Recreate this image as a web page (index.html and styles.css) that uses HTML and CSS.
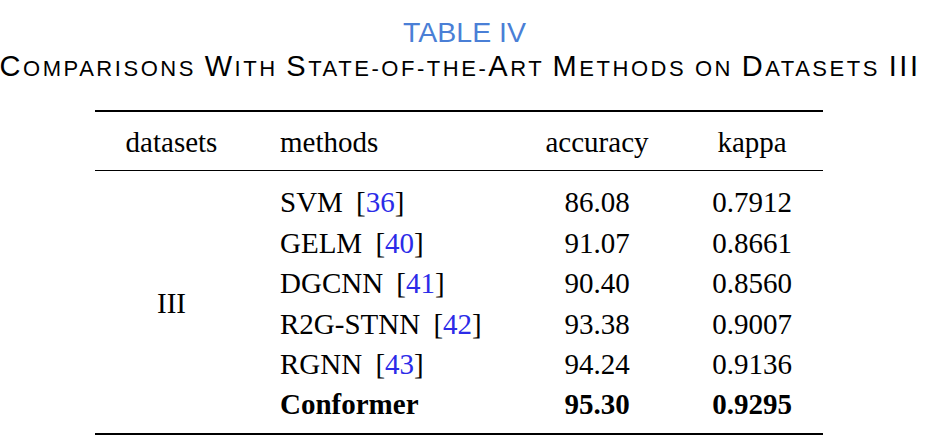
FILE: index.html
```html
<!DOCTYPE html>
<html>
<head>
<meta charset="utf-8">
<link rel="stylesheet" href="styles.css">
</head>
<body>
<div class="page">
  <div class="caption">
    <div class="label">TABLE IV</div>
    <div class="subtitle"><span class="big">C</span>OMPARISONS <span class="big">W</span>ITH <span class="big">S</span>TATE-OF-THE-<span class="big">A</span>RT <span class="big">M</span>ETHODS ON <span class="big">D</span>ATASETS <span class="big">III</span></div>
  </div>
  <div class="table">
    <div class="head">
      <div class="c1">datasets</div>
      <div class="c2">methods</div>
      <div class="c3">accuracy</div>
      <div class="c4">kappa</div>
    </div>
    <div class="body">
      <div class="c1 ds">III</div>
      <div class="c2">SVM [<span class="ref">36</span>]</div><div class="c3">86.08</div><div class="c4">0.7912</div>
      <div class="c2">GELM [<span class="ref">40</span>]</div><div class="c3">91.07</div><div class="c4">0.8661</div>
      <div class="c2">DGCNN [<span class="ref">41</span>]</div><div class="c3">90.40</div><div class="c4">0.8560</div>
      <div class="c2">R2G-STNN [<span class="ref">42</span>]</div><div class="c3">93.38</div><div class="c4">0.9007</div>
      <div class="c2">RGNN [<span class="ref">43</span>]</div><div class="c3">94.24</div><div class="c4">0.9136</div>
      <div class="c2 b">Conformer</div><div class="c3 b">95.30</div><div class="c4 b">0.9295</div>
    </div>
  </div>
</div>
</body>
</html>
```

FILE: styles.css
```css
html, body {
  margin: 0;
  padding: 0;
  background: #ffffff;
}
.page {
  width: 934px;
  height: 441px;
  display: flex;
  flex-direction: column;
}
.caption {
  display: flex;
  flex-direction: column;
  align-items: center;
  font-family: "Liberation Sans", Arial, sans-serif;
  padding-top: 16px;
}
.label {
  color: #4a7fd6;
  font-size: 28.5px;
  line-height: 33px;
  padding-right: 5px;
}
.subtitle {
  color: #000;
  font-size: 22px;
  line-height: 35px;
  letter-spacing: 2.55px;
  white-space: nowrap;
  padding-right: 14px;
}
.subtitle .big {
  font-size: 29px;
}
.table {
  margin-left: 95px;
  width: 728px;
  margin-top: 24px;
  border-top: 2px solid #000;
  border-bottom: 2px solid #000;
  font-family: "Liberation Serif", "Times New Roman", serif;
  font-size: 29px;
  line-height: 40.4px;
  color: #000;
}
.head, .body {
  display: grid;
  grid-template-columns: 153px 265px 168px 142px;
}
.head {
  padding: 10px 0 8px;
  border-bottom: 1px solid #000;
}
.body {
  padding: 11px 0 8px;
}
.c1, .c3, .c4 {
  text-align: center;
}
.c2 {
  padding-left: 32px;
  grid-column: 2;
  word-spacing: 6px;
}
.c3 { grid-column: 3; }
.c4 { grid-column: 4; }
.ds {
  grid-column: 1;
  grid-row: 1 / span 6;
  align-self: center;
}
.ref {
  color: #2b2be8;
}
.b {
  font-weight: bold;
}
```
